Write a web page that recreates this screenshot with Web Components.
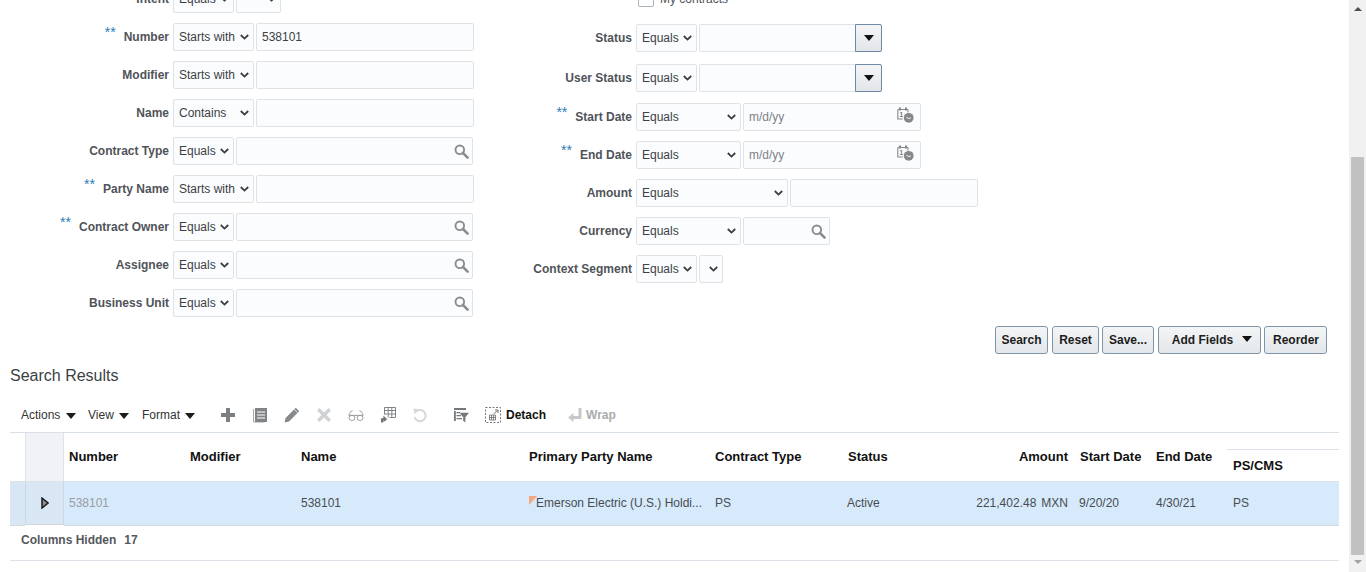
<!DOCTYPE html>
<html lang="en">
<head>
<meta charset="utf-8">
<title>Contracts search</title>
<style>
html, body { margin: 0; height: 572px; overflow: hidden; background: #fff; font: 12px "Liberation Sans", Arial, sans-serif; }
</style>
</head>
<body>

<x-page>
	<x-search-form>
		<x-form-col slot="left" style="--label-w: 169px">
			<x-row label="Intent"><x-select value="Equals" w="61"></x-select><x-select w="45"></x-select></x-row>
			<x-row label="Number" req><x-select value="Starts with" w="81"></x-select><x-input w="218" value="538101"></x-input></x-row>
			<x-row label="Modifier"><x-select value="Starts with" w="81"></x-select><x-input w="218"></x-input></x-row>
			<x-row label="Name"><x-select value="Contains" w="81"></x-select><x-input w="218"></x-input></x-row>
			<x-row label="Contract Type"><x-select value="Equals" w="61"></x-select><x-input w="237" icon="search"></x-input></x-row>
			<x-row label="Party Name" req><x-select value="Starts with" w="81"></x-select><x-input w="218"></x-input></x-row>
			<x-row label="Contract Owner" req><x-select value="Equals" w="61"></x-select><x-input w="237" icon="search"></x-input></x-row>
			<x-row label="Assignee"><x-select value="Equals" w="61"></x-select><x-input w="237" icon="search"></x-input></x-row>
			<x-row label="Business Unit"><x-select value="Equals" w="61"></x-select><x-input w="237" icon="search"></x-input></x-row>
		</x-form-col>
		<x-form-col slot="right" style="--label-w: 158px">
			<x-row h="29"><x-checkbox>My contracts</x-checkbox></x-row>
			<x-row label="Status" h="30"><x-select value="Equals" w="61"></x-select><x-input w="183" icon="drop"></x-input></x-row>
			<x-row label="User Status" h="29"><x-select value="Equals" w="61"></x-select><x-input w="183" icon="drop"></x-input></x-row>
			<x-row label="Start Date" req><x-select value="Equals" w="105"></x-select><x-input w="178" placeholder="m/d/yy" icon="date"></x-input></x-row>
			<x-row label="End Date" req><x-select value="Equals" w="105"></x-select><x-input w="178" placeholder="m/d/yy" icon="date"></x-input></x-row>
			<x-row label="Amount"><x-select value="Equals" w="152"></x-select><x-input w="188"></x-input></x-row>
			<x-row label="Currency"><x-select value="Equals" w="105"></x-select><x-input w="87" icon="search"></x-input></x-row>
			<x-row label="Context Segment"><x-select value="Equals" w="61"></x-select><x-select w="24"></x-select></x-row>
		</x-form-col>
	</x-search-form>

	<x-button-bar>
		<x-btn w="53" style="margin-right:4px">Search</x-btn>
		<x-btn w="47" style="margin-right:3px">Reset</x-btn>
		<x-btn w="52" style="margin-right:4px">Save...</x-btn>
		<x-btn w="103" menu style="margin-right:3px;padding-left:5px">Add Fields</x-btn>
		<x-btn w="63" style="padding-left:1px">Reorder</x-btn>
	</x-button-bar>

	<x-heading>Search Results</x-heading>

	<x-toolbar></x-toolbar>
	<x-results></x-results>
</x-page>

<script>
// small base class, every element just gives its css + html
class Base extends HTMLElement {
	connectedCallback() {
		if (this.shadowRoot) return;
		const root = this.attachShadow({mode: 'open'});
		root.innerHTML = '<style>' + this.css() + '</style>' + this.html();
	}
	css() { return ':host { display: block; }'; }
	html() { return '<slot></slot>'; }
}

const ICONS = {
	search: '<svg width="15" height="15" viewBox="0 0 15 15"><circle cx="5.8" cy="5.8" r="4.3" fill="none" stroke="#8a8d90" stroke-width="1.9"/><path d="M9 9l4.6 4.6" stroke="#8a8d90" stroke-width="2.6" stroke-linecap="round"/></svg>',
	date: '<svg width="17" height="16" viewBox="0 0 17 16"><path d="M1 2.5h10M.8 2.5v9.5h5M11 2.5v3" fill="none" stroke="#85888b" stroke-width="1.1"/><path d="M3 .5v3M9 .5v3" stroke="#85888b" stroke-width="2"/><text x="2.4" y="10" font-family="Liberation Sans" font-size="6.5" font-weight="bold" fill="#777">1</text><circle cx="11.7" cy="10.8" r="4.9" fill="#85888b"/><path d="M9.5 10.3l2 1.2 2.3-.6" fill="none" stroke="#fff" stroke-width="1"/></svg>',
	plus: '<svg width="16" height="16" viewBox="0 0 16 16"><path d="M6 1h4v5h5v4h-5v5H6v-5H1V6h5z" fill="#7c8083"/></svg>',
	list: '<svg width="16" height="16" viewBox="0 0 16 16"><path d="M1.5 2v13h11" fill="none" stroke="#a3a6a8"/><path d="M3 1h12v14H3z" fill="#808487"/><path d="M5 4.5h8v1H5zM5 7.5h8v1H5zM5 10.5h8v1H5z" fill="#fff"/></svg>',
	pencil: '<svg width="16" height="16" viewBox="0 0 16 16"><path d="M11.8 .8l3.4 3.4L5 14.4.6 15.4l1-4.4z" fill="#85898c"/><path d="M10.3 2.5l3.2 3.2" stroke="#fff" stroke-width=".8"/></svg>',
	cross: '<svg width="16" height="16" viewBox="0 0 16 16"><path d="M3.5 1L8 5.5 12.500 1 15 3.500 10.500 8 15 12.500 12.500 15 8 10.500 3.500 15 1 12.500 5.500 8 1 3.500z" fill="#d0d3d5"/></svg>',
	glasses: '<svg width="16" height="16" viewBox="0 0 16 16" fill="none" stroke="#9a9c9e" stroke-width="1"><path d="M.8 8.400h14.400"/><rect x="1" y="8.400" width="5.800" height="5" rx="2.400"/><rect x="9.200" y="8.400" width="5.800" height="5" rx="2.400"/><path d="M.9 8.400C1.200 6 2.400 4.200 4.600 3.800M15.100 8.400c-.3-2.400-1.500-4.200-3.700-4.600"/></svg>',
	freeze: '<svg width="16" height="16" viewBox="0 0 16 16"><path d="M4.500 .5h11v10h-6M4.500 .5v7M4.500 3.500h11M8.200 .5v10M11.800 .5v10M4.500 7h11" fill="none" stroke="#808487"/><path d="M1 15.600v-4.400h2.400V8.600l3.800 3.600-3.800 3v-2H3v2.400z" fill="#6f7376"/></svg>',
	undo: '<svg width="16" height="16" viewBox="0 0 16 16"><path d="M4.400 4.300A5.600 5.600 0 1 1 2.600 10" fill="none" stroke="#d5d8da" stroke-width="2"/><path d="M1.200 1.500l6.300.8-4.800 5z" fill="#d5d8da"/></svg>',
	filter: '<svg width="16" height="16" viewBox="0 0 16 16"><path d="M1 1h12v2H1zM1 4h1.800v10H1zM3.500 5H7v1.300H3.500zM3.500 8H8v1.300H3.500zM3.500 11H9v1.300H3.500z" fill="#74787b"/><path d="M6.500 5.800H16l-3.600 4.400v5l-2.200-1.200v-3.800z" fill="#74787b"/></svg>',
	detach: '<svg width="16" height="16" viewBox="0 0 16 16"><path d="M.5.500h15v15H.5z" fill="none" stroke="#77797c" stroke-dasharray="2 1.500"/><path d="M4.500 8h6v5h-6zM6.500 8v5M8.500 8v5M4.500 10.500h6" fill="none" stroke="#66696c" stroke-width=".8"/><path d="M9 6.800l3-3M10 3h3v3" fill="none" stroke="#66696c"/></svg>',
	wrap: '<svg width="16" height="16" viewBox="0 0 16 16"><path d="M11.500 1h3v11H6.500v3L1 10.500 6.500 6v3h5z" fill="#c6c9cb"/></svg>'
};

customElements.define('x-page', class extends Base {
	css() { return `
		:host { display: flex; height: 572px; overflow: hidden; color: #333; }
		.main { flex: 1; min-width: 0; overflow: hidden; }
		.bar { width: 17px; background: #f1f1f1; display: flex; flex-direction: column; align-items: center; flex: none; }
		.up { height: 157px; padding-top: 7px; box-sizing: border-box; }
		.thumb { width: 13px; height: 398px; background: #c1c1c1; flex: none; }
		.down { padding-top: 5px; }
		svg { display: block; }
	`; }
	html() { return `
		<div class="main"><slot></slot></div>
		<div class="bar">
			<div class="up"><svg width="8" height="4"><path d="M4 0l4 4H0z" fill="#505050"/></svg></div>
			<div class="thumb"></div>
			<div class="down"><svg width="8" height="4"><path d="M0 0h8L4 4z" fill="#a3a3a3"/></svg></div>
		</div>
	`; }
});

customElements.define('x-search-form', class extends Base {
	css() { return ':host { display: flex; margin-top: -15px; height: 332px; } .l { width: 474px; flex: none; }'; }
	html() { return '<div class="l"><slot name="left"></slot></div><div><slot name="right"></slot></div>'; }
});

customElements.define('x-form-col', class extends Base {
	css() { return ':host { display: flex; flex-direction: column; gap: 10px; }'; }
});

customElements.define('x-row', class extends Base {
	css() { return `
		:host { display: flex; align-items: flex-start; height: ${this.getAttribute('h') || 28}px; }
		.lab { width: var(--label-w); margin-right: 4px; height: 28px; line-height: 28px; text-align: right; font-weight: bold; color: #505359; white-space: nowrap; flex: none; }
		.req { color: #2a7db5; font-weight: normal; font-size: 14px; margin-right: 8px; position: relative; top: -4px; line-height: 0; }
		.ctl { display: flex; gap: 2px; }
	`; }
	html() {
		const label = this.getAttribute('label') || '';
		const req = this.hasAttribute('req') ? '<span class="req">**</span>' : '';
		return `<div class="lab">${req}${label}</div><div class="ctl"><slot></slot></div>`;
	}
});

customElements.define('x-select', class extends Base {
	css() { return `
		:host { display: block; width: ${this.getAttribute('w')}px; height: 28px; box-sizing: border-box; border: 1px solid #dfe3e8; border-radius: 2px; background: #fbfcfe; position: relative; color: #3c3f44; }
		span { display: block; padding-left: 5px; line-height: 27px; white-space: nowrap; }
		svg { position: absolute; right: 4.5px; top: 10px; }
	`; }
	html() { return `<span>${this.getAttribute('value') || ''}</span>
		<svg width="9" height="6" viewBox="0 0 9 6"><path d="M.8 1l3.700 3.600L8.200 1" fill="none" stroke="#3d3d3d" stroke-width="1.800"/></svg>`; }
});

customElements.define('x-input', class extends Base {
	css() { return `
		:host { display: flex; width: ${this.getAttribute('w')}px; height: 28px; box-sizing: border-box; border: 1px solid #dfe3e8; border-radius: 2px; background: #fbfcfe; color: #3c3f44; align-items: center; }
		.t { flex: 1; padding: 1px 0 0 5px; line-height: 25px; }
		.ph { color: #7d8287; }
		.ic { margin-right: 3px; display: flex; }
		.date { margin: -5px 6px 0 0; }
		.drop { align-self: stretch; width: 27px; margin: -1px -1px -1px 0; box-sizing: border-box; border: 1px solid #6e8aa6; border-radius: 0 2px 2px 0; background: linear-gradient(#f3f5f6, #e3e6e9); display: flex; align-items: center; justify-content: center; }
	`; }
	html() {
		const val = this.getAttribute('value');
		const ph = this.getAttribute('placeholder');
		const icon = this.getAttribute('icon');
		let right = '';
		if (icon === 'search') right = `<div class="ic">${ICONS.search}</div>`;
		if (icon === 'date') right = `<div class="ic date">${ICONS.date}</div>`;
		if (icon === 'drop') right = '<div class="drop"><svg width="10" height="6"><path d="M0 0h10L5 6z" fill="#111"/></svg></div>';
		return `<div class="t ${ph ? 'ph' : ''}">${val || ph || ''}</div>${right}`;
	}
});

customElements.define('x-checkbox', class extends Base {
	css() { return `
		:host { display: flex; align-items: center; gap: 6px; height: 28px; margin-left: 2px; color: #505359; }
		i { width: 16px; height: 16px; box-sizing: border-box; border: 1px solid #aab2ba; border-radius: 2px; background: #fff; display: block; }
	`; }
	html() { return '<i></i><slot></slot>'; }
});

customElements.define('x-button-bar', class extends Base {
	css() { return ':host { display: flex; justify-content: flex-end; padding-right: 22px; margin-top: 9px; }'; }
});

customElements.define('x-btn', class extends Base {
	css() { return `
		:host { display: flex; width: ${this.getAttribute('w')}px; height: 28px; box-sizing: border-box; border: 1px solid #7f95aa; border-radius: 3px; background: linear-gradient(#f3f5f6, #e3e7ea); align-items: center; justify-content: center; font-weight: bold; color: #1d1d1d; }
		svg { margin: -3px 0 0 9px; }
	`; }
	html() {
		const arrow = this.hasAttribute('menu') ? '<svg width="10" height="6"><path d="M0 0h10L5 6z" fill="#111"/></svg>' : '';
		return '<slot></slot>' + arrow;
	}
});

customElements.define('x-heading', class extends Base {
	css() { return ':host { display: block; margin: 12px 0 0 10px; font-size: 16px; line-height: 20px; color: #3b3f44; }'; }
});

customElements.define('x-toolbar', class extends Base {
	css() { return `
		:host { display: flex; align-items: center; height: 35px; margin-top: 11px; padding-left: 21px; }
		.menu { display: flex; align-items: center; justify-content: space-between; box-sizing: border-box; color: #333; flex: none; }
		.menu svg { margin-top: 2px; }
		.ic { width: 32px; height: 16px; display: flex; justify-content: center; flex: none; }
		.gap { width: 9px; flex: none; }
		b { color: #111; }
		.off { color: #a9acae; }
		.ic.det { width: 31px; }
		.dt { margin: 0 21px 0 -2px; }
		.ic.wr { width: 16px; margin-right: 3px; }
	`; }
	html() {
		const tri = '<svg width="10" height="6"><path d="M0 0h10L5 6z" fill="#1c1c1c"/></svg>';
		const menus = [['Actions', 67, 12], ['View', 54, 13], ['Format', 70, 17]].map(m =>
			`<div class="menu" style="width:${m[1]}px;padding-right:${m[2]}px">${m[0]}${tri}</div>`).join('');
		const ic = ['plus', 'list', 'pencil', 'cross', 'glasses', 'freeze', 'undo'].map(n => `<div class="ic">${ICONS[n]}</div>`).join('');
		return menus + ic + `<div class="gap"></div><div class="ic">${ICONS.filter}</div>
			<div class="ic det">${ICONS.detach}</div><b class="dt">Detach</b>
			<div class="ic wr">${ICONS.wrap}</div><b class="off">Wrap</b>`;
	}
});

customElements.define('x-results', class extends Base {
	css() { return `
		:host { display: block; margin: 0 10px; }
		.grid { display: grid; grid-template-columns: 15px 39px 120px 111px 228px 186px 133px 108px 123px 77px 77px 112px; border-top: 1px solid #d9e0e8; }
		.h { height: 48px; line-height: 47px; padding-left: 6px; font-size: 13px; font-weight: bold; color: #111; border-bottom: 1px solid #dde2e8; white-space: nowrap; }
		.h.first { padding-left: 5px; }
		.h.sd { padding-left: 7px; }
		.h.r, .c.r { text-align: right; padding: 0 5px 0 0; }
		.h.ps { margin-top: 16px; line-height: 31px; border-top: 1px solid #d9e0e8; height: 31px; }
		.sel { background: #f0f2f6; border-left: 1px solid #dde2e8; border-right: 1px solid #dde2e8; padding: 0; box-sizing: border-box; height: 49px; }
		.gut { padding: 0; }
		.c { height: 43px; line-height: 42px; padding-left: 6px; background: #d6eafc; color: #484c52; white-space: nowrap; border-bottom: 1px solid #d4d8dc; position: relative; }
		.c.first { padding-left: 5px; }
		.c.g { background: #d9e7f4; padding: 0; }
		.c.s { background: #d9e7f4; padding: 0 0 0 1px; border-left: 1px solid #c9d8e6; border-right: 1px solid #c9d8e6; display: flex; align-items: center; justify-content: center; box-sizing: border-box; }
		.c.dim { color: #9a9da1; }
		.c.party { padding: 0 0 0 13px; }
		.c.act { padding-left: 5px; }
		.flag { position: absolute; left: 6px; top: 14px; width: 0; height: 0; border-top: 9px solid #f4a880; border-right: 8px solid transparent; }
		.mx { margin-left: 5px; }
		.foot { height: 34px; line-height: 28px; padding-left: 11px; border-bottom: 1px solid #dde2e8; color: #55585d; font-weight: bold; }
		.foot span { margin-left: 8px; }
	`; }
	html() {
		const heads = [['Number', 'first'], ['Modifier'], ['Name'], ['Primary Party Name'], ['Contract Type'], ['Status'], ['Amount', 'r'], ['Start Date', 'sd'], ['End Date'], ['PS/CMS', 'ps']];
		const head = heads.map(h => `<div class="h ${h[1] || ''}">${h[0]}</div>`).join('');
		return `<div class="grid">
			<div class="h gut"></div><div class="h sel"></div>${head}
			<div class="c g"></div>
			<div class="c s"><svg width="8" height="12" viewBox="0 0 8 12"><path d="M1 1l6 5-6 5z" fill="#8b8f93" stroke="#1b1b1b" stroke-width="1.500"/></svg></div>
			<div class="c dim first">538101</div>
			<div class="c"></div>
			<div class="c">538101</div>
			<div class="c party"><i class="flag"></i>Emerson Electric (U.S.) Holdi...</div>
			<div class="c">PS</div>
			<div class="c act">Active</div>
			<div class="c r">221,402.48<span class="mx">MXN</span></div>
			<div class="c">9/20/20</div>
			<div class="c">4/30/21</div>
			<div class="c">PS</div>
		</div>
		<div class="foot">Columns Hidden<span>17</span></div>`;
	}
});
</script>
</body>
</html>
